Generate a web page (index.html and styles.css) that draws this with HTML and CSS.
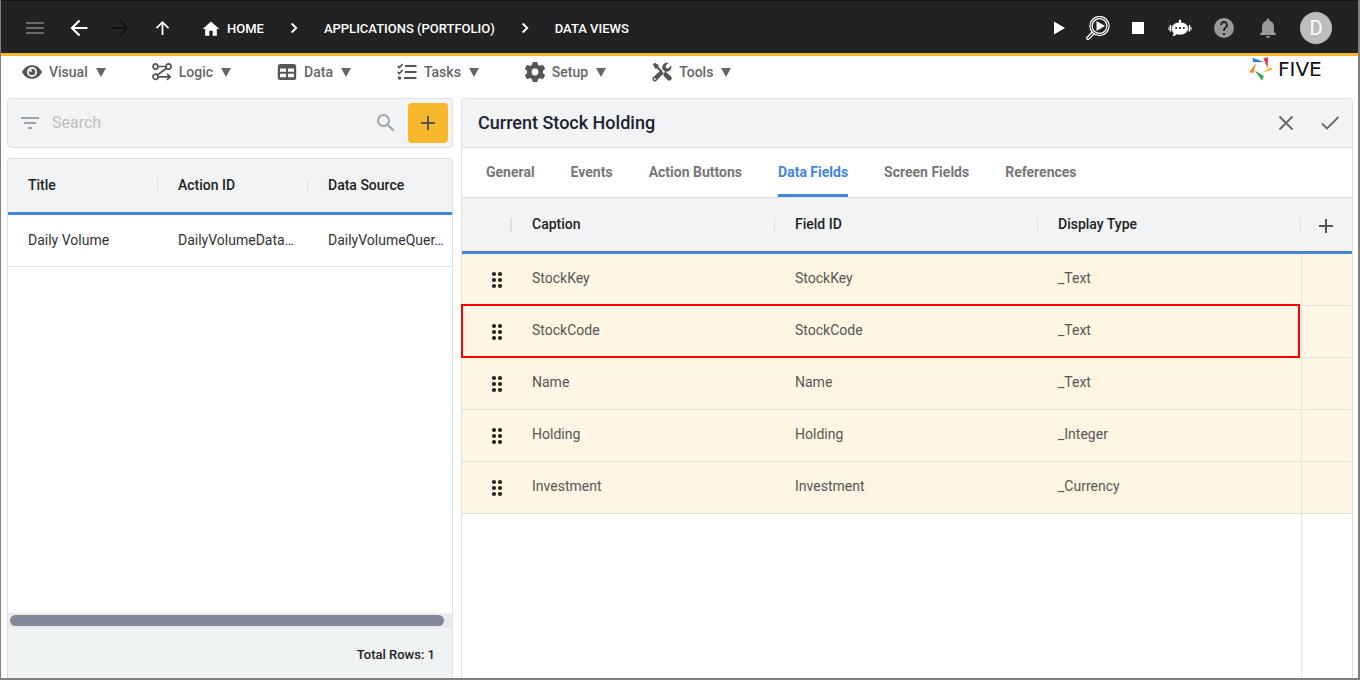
FILE: index.html
```html
<!DOCTYPE html>
<html lang="en">
<head>
<meta charset="utf-8">
<title>Five - Data Views</title>
<link rel="stylesheet" href="styles.css">
</head>
<body>
<div class="window">
  <header class="topbar">
    <div class="nav-buttons">
      <button class="icon-btn dim" aria-label="Menu"><svg width="24" height="24" viewBox="0 0 24 24"><path fill="currentColor" d="M3 18h18v-2H3zm0-5h18v-2H3zm0-7v2h18V6z"/></svg></button>
      <button class="icon-btn" aria-label="Back"><svg width="24" height="24" viewBox="0 0 24 24"><path fill="none" stroke="currentColor" stroke-width="2.2" d="M20.500 12H6M12.500 4.500L5 12L12.500 19.500"/></svg></button>
      <button class="icon-btn off" aria-label="Forward" disabled><svg width="24" height="24" viewBox="0 0 24 24"><path fill="none" stroke="currentColor" stroke-width="1.800" d="M3 12h15M11 4.500L18.500 12L11 19.500"/></svg></button>
      <button class="icon-btn" aria-label="Up"><svg width="24" height="24" viewBox="0 0 24 24"><path fill="none" stroke="currentColor" stroke-width="1.800" d="M11.500 19V6.500M5.500 12.200L11.500 6.200L17.500 12.200"/></svg></button>
    </div>
    <nav class="crumbs" aria-label="Breadcrumb">
      <a href="#"><svg width="20" height="20" viewBox="0 0 24 24"><path fill="currentColor" d="M10 20v-6h4v6h5v-8h3L12 3 2 12h3v8z"/></svg>HOME</a>
      <svg class="sep" width="20" height="20" viewBox="0 0 24 24"><path fill="currentColor" d="M10 6 8.590 7.410 13.170 12l-4.580 4.590L10 18l6-6z" stroke="currentColor" stroke-width=".5"/></svg>
      <a href="#">APPLICATIONS (PORTFOLIO)</a>
      <svg class="sep" width="20" height="20" viewBox="0 0 24 24"><path fill="currentColor" d="M10 6 8.590 7.410 13.170 12l-4.580 4.590L10 18l6-6z" stroke="currentColor" stroke-width=".5"/></svg>
      <a href="#">DATA VIEWS</a>
    </nav>
    <div class="actions">
      <div class="run">
        <button class="icon-btn" aria-label="Run"><svg width="24" height="24" viewBox="0 0 24 24"><path fill="currentColor" d="M8 5.500v13L19 12z"/></svg></button>
        <button class="icon-btn" aria-label="Inspect"><svg width="24" height="24" viewBox="0 0 24 24"><g fill="none" stroke="currentColor"><circle cx="13.500" cy="10" r="9.600" stroke-width="1.200"/><circle cx="13.500" cy="10" r="7.400" stroke-width="1.300"/><path stroke-width="1.200" d="M6.500 15.500L1 21.500a1.200 1.200 0 0 0 1.800 1.600L8.500 17.500"/></g><path fill="currentColor" d="M10.500 5v10L19 10z"/></svg></button>
        <button class="icon-btn" aria-label="Stop"><svg width="24" height="24" viewBox="0 0 24 24"><path fill="currentColor" d="M6 6h12v12H6z"/></svg></button>
      </div>
      <button class="icon-btn" aria-label="Assistant"><svg width="24" height="24" viewBox="0 0 24 24"><path fill="currentColor" d="M11 6.500V5.500a1.200 1.200 0 1 1 2 0v1c4 .2 7 2.500 7 6s-3.500 6.200-8 6.200c-1.200 0-2.300-.2-3.300-.5C7.500 19.500 6 20 4.500 20c.6-.6 1-1.600 1-2.700C4.500 16 4 14.500 4 12.500c0-3.500 3-5.800 7-6z"/><path fill="none" stroke="currentColor" stroke-width="1.600" d="M2.500 9v6.500M21.500 9v6.500"/><path fill="none" stroke="currentColor" d="M1 11v3M23 11v3"/><g fill="#222"><circle cx="8.200" cy="12" r="1.100"/><circle cx="12" cy="12" r="1.100"/><circle cx="15.800" cy="12" r="1.100"/></g></svg></button>
      <div class="status">
        <button class="icon-btn gray" aria-label="Help"><svg width="24" height="24" viewBox="0 0 24 24"><path fill="currentColor" d="M12 2a10 10 0 1 0 0 20 10 10 0 0 0 0-20zm1 17h-2v-2h2zm2.070-7.750-.9.920C13.450 12.900 13 13.500 13 15h-2v-.5c0-1.100.450-2.100 1.170-2.830l1.240-1.260c.370-.360.590-.860.590-1.410 0-1.100-.9-2-2-2s-2 .9-2 2H8c0-2.210 1.790-4 4-4s4 1.790 4 4c0 .880-.360 1.680-.930 2.250z"/></svg></button>
        <button class="icon-btn gray" aria-label="Notifications"><svg width="24" height="24" viewBox="0 0 24 24"><path fill="currentColor" d="M12 22c1.100 0 2-.9 2-2h-4c0 1.100.890 2 2 2zm6-6v-5c0-3.070-1.640-5.640-4.500-6.320V4c0-.830-.670-1.500-1.500-1.500s-1.500.670-1.500 1.500v.680C7.630 5.360 6 7.920 6 11v5l-2 2v1h16v-1z"/></svg></button>
        <button class="avatar" aria-label="Account">D</button>
      </div>
    </div>
  </header>

  <div class="menubar">
    <nav class="menu" aria-label="Main">
      <button><svg width="20" height="20" viewBox="0 0 20 20"><path fill="currentColor" fill-rule="evenodd" d="M0 10C2 5.800 5.700 3.200 10 3.200S18 5.800 20 10c-2 4.200-5.700 6.800-10 6.800S2 14.200 0 10zm10-5a5 5 0 1 0 0 10 5 5 0 0 0 0-10z"/><circle cx="10" cy="10" r="3.300" fill="currentColor"/><circle cx="8.600" cy="8.600" r="1.300" fill="#fff"/></svg>Visual<span class="caret"></span></button>
      <button><svg width="20" height="20" viewBox="0 0 20 20"><g fill="none" stroke="currentColor" stroke-width="1.700"><ellipse cx="3.500" cy="4.500" rx="2.500" ry="2.700"/><ellipse cx="16.500" cy="4.500" rx="2.500" ry="2.700"/><ellipse cx="3.500" cy="14.800" rx="2.500" ry="2.700"/><path d="M6 4.500h8M14.500 6.300L5.400 13M6 14.800h12M15 11.800l3.200 3-3.200 3"/></g></svg>Logic<span class="caret"></span></button>
      <button><svg width="20" height="20" viewBox="0 0 20 20"><path fill="currentColor" fill-rule="evenodd" d="M3.300 2h13.400A2.500 2.500 0 0 1 19.200 4.500v11a2.500 2.500 0 0 1-2.500 2.500H3.300a2.500 2.500 0 0 1-2.500-2.500v-11A2.500 2.500 0 0 1 3.300 2zM3 6.500v3.300h6V6.500zm8 0v3.300h6V6.500zm-8 5.300v3.400h6v-3.400zm8 0v3.400h6v-3.400z"/></svg>Data<span class="caret"></span></button>
      <button><svg width="20" height="20" viewBox="0 0 20 20"><path fill="none" stroke="currentColor" stroke-width="2" d="M8 4h11.500M8 10h11.500M7 16h12.500"/><path fill="none" stroke="currentColor" stroke-width="1.600" d="M.6 3.900l1.700 1.600L5.600 2M.6 9.900l1.700 1.600L5.600 8"/><circle cx="2.500" cy="16" r="1.800" fill="currentColor"/></svg>Tasks<span class="caret"></span></button>
      <button><svg width="20" height="20" viewBox="2 2 20 20"><path fill="currentColor" d="M19.900 13.200a8 8 0 0 0 0-2.400l2-1.600a.6.6 0 0 0 .1-.7l-2-3.400a.6.6 0 0 0-.7-.2l-2.400 1a8 8 0 0 0-2-1.200l-.4-2.300a.6.600 0 0 0-.6-.4h-3.800a.6.600 0 0 0-.6.400l-.4 2.300a8 8 0 0 0-2 1.200l-2.400-1a.6.600 0 0 0-.7.200L2 8.500a.6.600 0 0 0 .1.700l2 1.600a8 8 0 0 0 0 2.400l-2 1.600a.6.600 0 0 0-.1.700l2 3.400c.1.200.4.300.7.200l2.400-1a8 8 0 0 0 2 1.200l.4 2.300c0 .2.300.4.600.4h3.800c.3 0 .5-.2.600-.4l.4-2.300a8 8 0 0 0 2-1.200l2.400 1c.3.100.6 0 .7-.2l2-3.400a.6.600 0 0 0-.1-.7zM12 15.400a3.400 3.400 0 1 1 0-6.800 3.400 3.400 0 0 1 0 6.800z"/></svg>Setup<span class="caret"></span></button>
      <button><svg width="20" height="20" viewBox="0 0 20 20"><path fill="currentColor" d="M1 2.500L2.800.8 6.500 3l.2 2.200 4 4-1.600 1.600-4-4L3 6.600zM11.500 11l1.800-1 1.500.4 4.200 4.200a2.300 2.300 0 0 1-3.300 3.300l-4.200-4.200z"/><path fill="currentColor" d="M.9 15.600L8.700 8.200l3 3L4.200 19A2.400 2.400 0 0 1 .9 15.600zM10.200 6.500a5 5 0 0 1 6.300-5.700l-2.900 3 .4 2.200 2.200.4 3-2.900a5 5 0 0 1-6.700 5.900z"/><circle cx="2.800" cy="17" r=".9" fill="#fff"/></svg>Tools<span class="caret"></span></button>
    </nav>
    <a class="brand" href="#" aria-label="Five"><svg width="24" height="24" viewBox="0 0 24 24"><path fill="#3d7fd6" d="M3.500.8l.5 4.500 11-.2z"/><path fill="#e03a3e" d="M14.500 1.500L19 0l-.4 11.500z"/><path fill="#f8b82b" d="M24 12.500l-2.500-2.200L13.500 15.500z"/><path fill="#3aa757" d="M5.500 13.500L13 23.500l2-4.500z"/><path fill="#f5822a" d="M7.200 6L.2 15.300l4.200.8z"/></svg>FIVE</a>
  </div>

  <main class="content">
    <section class="list">
      <form class="search">
        <svg width="24" height="24" viewBox="0 0 24 24"><path fill="#9aa2aa" d="M10 18h4v-2h-4zM3 6v2h18V6zm3 7h12v-2H6z"/></svg>
        <input type="text" placeholder="Search" aria-label="Search">
        <button type="button" class="find" aria-label="Find"><svg width="24" height="24" viewBox="0 0 24 24"><path fill="currentColor" d="M15.500 14h-.790l-.280-.270A6.470 6.470 0 0 0 16 9.500 6.500 6.500 0 1 0 9.500 16c1.610 0 3.090-.590 4.230-1.570l.270.280v.790l5 4.990L20.490 19zm-6 0C7.010 14 5 11.990 5 9.500S7.010 5 9.500 5 14 7.010 14 9.500 11.990 14 9.500 14z"/></svg></button>
        <button type="button" class="add" aria-label="Add"><svg width="24" height="24" viewBox="0 0 24 24"><path fill="currentColor" d="M19 13h-6v6h-2v-6H5v-2h6V5h2v6h6z"/></svg></button>
      </form>
      <div class="card records">
        <table class="list-table">
          <colgroup><col class="c150"><col class="c150"><col></colgroup>
          <thead><tr><th><span>Title</span></th><th><span>Action ID</span></th><th><span>Data Source</span></th></tr></thead>
          <tbody><tr><td>Daily Volume</td><td>DailyVolumeData…</td><td>DailyVolumeQuer…</td></tr></tbody>
        </table>
        <div class="track"><div class="thumb"></div></div>
        <footer>Total Rows: 1</footer>
      </div>
    </section>

    <section class="card detail">
      <div class="title">
        <h1>Current Stock Holding</h1>
        <button class="icon-btn" aria-label="Cancel"><svg width="24" height="24" viewBox="0 0 24 24"><path fill="none" stroke="currentColor" stroke-width="1.800" d="M5.500 5.500l13 13M18.500 5.500l-13 13"/></svg></button>
        <button class="icon-btn" aria-label="Save"><svg width="24" height="24" viewBox="0 0 24 24"><path fill="none" stroke="currentColor" stroke-width="1.800" d="M4 12.500l5 5L20.500 6"/></svg></button>
      </div>
      <div class="tabs" role="tablist">
        <button role="tab">General</button>
        <button role="tab">Events</button>
        <button role="tab">Action Buttons</button>
        <button role="tab" class="active" aria-selected="true">Data Fields</button>
        <button role="tab">Screen Fields</button>
        <button role="tab">References</button>
      </div>
      <table class="fields">
        <colgroup><col class="c50"><col><col><col><col class="c51"></colgroup>
        <thead><tr><th></th><th><span>Caption</span></th><th><span>Field ID</span></th><th><span>Display Type</span></th><th class="end"><button class="icon-btn" aria-label="Add field"><svg width="24" height="24" viewBox="0 0 24 24"><path fill="currentColor" d="M19 13h-6v6h-2v-6H5v-2h6V5h2v6h6z"/></svg></button></th></tr></thead>
        <tbody>
          <tr><td class="grip"><svg width="12" height="18" viewBox="0 0 12 18"><use href="#dots"/></svg></td><td>StockKey</td><td>StockKey</td><td>_Text</td><td class="end"></td></tr>
          <tr class="marked"><td class="grip"><svg width="12" height="18" viewBox="0 0 12 18"><use href="#dots"/></svg><div class="frame"></div></td><td>StockCode</td><td>StockCode</td><td>_Text</td><td class="end"></td></tr>
          <tr><td class="grip"><svg width="12" height="18" viewBox="0 0 12 18"><use href="#dots"/></svg></td><td>Name</td><td>Name</td><td>_Text</td><td class="end"></td></tr>
          <tr><td class="grip"><svg width="12" height="18" viewBox="0 0 12 18"><use href="#dots"/></svg></td><td>Holding</td><td>Holding</td><td>_Integer</td><td class="end"></td></tr>
          <tr><td class="grip"><svg width="12" height="18" viewBox="0 0 12 18"><use href="#dots"/></svg></td><td>Investment</td><td>Investment</td><td>_Currency</td><td class="end"></td></tr>
        </tbody>
      </table>
      <div class="rest"><div></div></div>
    </section>
  </main>
</div>
<svg class="defs" width="0" height="0" aria-hidden="true"><defs><g id="dots" fill="#222"><circle cx="3" cy="3" r="2.100"/><circle cx="9" cy="3" r="2.100"/><circle cx="3" cy="9" r="2.100"/><circle cx="9" cy="9" r="2.100"/><circle cx="3" cy="15" r="2.100"/><circle cx="9" cy="15" r="2.100"/></g></defs></svg>
</body>
</html>
```

FILE: styles.css
```css
* { box-sizing: border-box; }
html, body { height: 100%; margin: 0; }
body { font: 14px/20px Roboto, "Liberation Sans", sans-serif; color: #333; background: #fff; overflow: hidden; }
button, input { font: inherit; color: inherit; border: 0; padding: 0; margin: 0; background: none; }
svg { display: block; flex: none; }
a { color: inherit; text-decoration: none; }
.defs { position: absolute; }

.window { height: 100%; display: flex; flex-direction: column; border: solid #808080; border-width: 0 2px 2px 1px; }
.icon-btn { display: flex; align-items: center; justify-content: center; width: 24px; height: 24px; flex: none; }

.topbar { display: flex; align-items: center; height: 56px; flex: none; background: #222; border-top: 1px solid #111; border-bottom: 3px solid #f8b82b; color: #fff; padding: 2px 26px 0 22px; }
.nav-buttons { display: flex; gap: 18px; margin-right: 26px; }
.nav-buttons .icon-btn:nth-child(2) { margin-left: 2px; }
.dim { color: #6a6a6a; }
.off { color: #111; }
.gray { color: #999; }
.crumbs { display: flex; align-items: center; flex: 1; gap: 20px; font-size: 13px; line-height: 18px; font-weight: 500; }
.crumbs a { display: flex; align-items: center; gap: 6px; padding-top: 1px; }
.run { display: flex; gap: 16px; }
.status { display: flex; align-items: center; gap: 20px; margin-left: 2px; }
.actions { display: flex; align-items: center; gap: 18px; }
.avatar { width: 32px; height: 32px; border-radius: 50%; background: #bdbdbd; color: #fff; font-size: 20px; line-height: 32px; }

.menubar { display: flex; align-items: flex-start; justify-content: space-between; height: 42px; flex: none; padding: 0 22px 0 21px; color: #666; }
.menu { display: flex; gap: 46px; padding-top: 6px; }
.menu button { display: flex; align-items: center; font-weight: 500; }
.menu svg { margin-right: 7px; color: #555; }
.caret { margin-left: 8px; border: solid transparent; border-width: 9px 5px 0; border-top-color: #666; }
.brand { display: flex; align-items: center; gap: 5px; min-width: 87px; padding-top: 1px; font: 20px/24px "DejaVu Sans", sans-serif; color: #111; }

.content { flex: 1; min-height: 0; display: grid; grid-template-columns: 1fr 2fr; gap: 8px; padding: 0 5px 0 6px; }
.list { display: flex; flex-direction: column; gap: 10px; min-width: 0; }
.search { display: flex; align-items: center; height: 50px; flex: none; padding: 0 4px 0 10px; border: 1px solid #dedfe1; border-radius: 4px; background: #f1f3f4; }
.search input { flex: 1; min-width: 0; margin-left: 10px; font-size: 16px; line-height: 24px; outline: 0; }
.search input::placeholder { color: #bdbfc2; opacity: 1; }
.find { color: #9aa2aa; margin-right: 10px; }
.add { display: flex; align-items: center; justify-content: center; width: 40px; height: 40px; border-radius: 4px; background: #f8b82b; color: #555; }
.card { display: flex; flex-direction: column; min-width: 0; flex: 1; border: 1px solid #dedfe1; border-bottom: 0; border-radius: 4px 4px 0 0; }
.records { overflow: hidden; }

table { width: 100%; table-layout: fixed; border-collapse: separate; border-spacing: 0; flex: none; }
th { height: 56px; padding: 0 0 0 20px; text-align: left; font-weight: 500; color: #222; background: #f1f3f4; border-bottom: 3px solid #4285d9; }
th span { display: block; line-height: 12px; padding-bottom: 2px; margin-right: -1px; border-right: 2px solid #dedfe1; }
td { height: 52px; padding: 0 0 2px 20px; border-bottom: 1px solid #e3e3e3; white-space: nowrap; }
.list-table th:last-child span { border: 0; }
.c150 { width: 150px; }
.c50 { width: 50px; }
.c51 { width: 51px; }
.track { margin-top: auto; height: 15px; padding: 2px 8px 2px 2px; background: #ebebeb; }
.thumb { height: 11px; border-radius: 6px; background: #828898; }
footer { height: 50px; padding: 17px 17px 0 0; text-align: right; font-size: 13px; font-weight: 500; color: #222; background: #eef2f3; }

.title { display: flex; align-items: center; gap: 20px; height: 49px; flex: none; padding: 0 10px 0 16px; background: #f1f3f4; border-bottom: 1px solid #dedfe1; border-radius: 3px 3px 0 0; color: #666; }
.title h1 { flex: 1; margin: 0; font-size: 18px; line-height: 24px; font-weight: 500; color: #1c2230; }
.tabs { display: flex; gap: 36px; height: 50px; flex: none; padding: 0 24px; border-bottom: 1px solid #dedfe1; }
.tabs button { font-weight: 700; color: #777; padding-bottom: 2px; border: solid transparent; border-width: 3px 0; }
.tabs .active { color: #4285d9; border-bottom-color: #4285d9; }
.fields td { background: #fff5e3; color: #555; padding-bottom: 4px; }
.fields .grip { padding: 0 0 0 29px; }
.fields .end { padding: 0; }
.fields th.end .icon-btn { margin: 2px 0 0 13px; color: #555; }
.fields td.end, .rest div { border-left: 1px solid #e3e3e3; }
.fields th:first-child { background: linear-gradient(#dedfe1, #dedfe1) right center / 2px 14px no-repeat #f1f3f4; }
.marked { position: relative; }
.frame { position: absolute; inset: -2px 52px 0 -1px; border: 2px solid #f00; }
.rest { flex: 1; display: flex; justify-content: flex-end; }
.rest div { width: 51px; }
```
